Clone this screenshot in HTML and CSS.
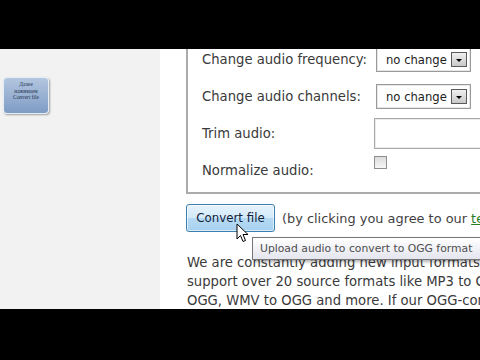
FILE: index.html
```
<!DOCTYPE html>
<html>
<head>
<meta charset="utf-8">
<link rel="stylesheet" href="styles.css">
</head>
<body>
<div class="screen">
  <div class="bar"></div>
  <div class="view">
    <aside class="side">
      <div class="note">Далее<br>нажимаем<br>Convert file</div>
    </aside>
    <main class="main">
      <div class="opts">
        <div class="row"><span class="lbl">Change audio frequency:</span><span class="sel">no change<i class="arr"></i></span></div>
        <div class="row"><span class="lbl">Change audio channels:</span><span class="sel">no change<i class="arr"></i></span></div>
        <div class="row"><span class="lbl">Trim audio:</span><span class="inp"></span></div>
        <div class="row"><span class="lbl">Normalize audio:</span><span class="chk"></span></div>
      </div>
      <div class="submit">
        <span class="btn">Convert file</span>
        <span class="agree">(by clicking you agree to our <a class="terms">terms</a>)</span>
        <svg class="cursor" width="13" height="21" viewBox="0 0 13 21"><path d="M1 1 L1 16 L4.5 12.5 L7 18.5 L9.5 17.5 L7 11.5 L12 11.5 Z" fill="#fff" stroke="#000" stroke-width="1" stroke-linejoin="round"/></svg>
        <div class="tip">Upload audio to convert to OGG format</div>
      </div>
      <p class="text">We are constantly adding new input formats. Currently we<br>support over 20 source formats like MP3 to OGG, WAV to<br>OGG, WMV to OGG and more. If our OGG-converter does</p>
    </main>
  </div>
  <div class="bar bottom"></div>
</div>
</body>
</html>
```
FILE: styles.css
```
* { box-sizing: border-box; }
html, body { margin: 0; padding: 0; background: #000; }
.screen { width: 480px; height: 360px; overflow: hidden; display: flex; flex-direction: column; }
.bar { height: 49px; background: #000; flex: none; }
.bar.bottom { height: 51px; }
.view { height: 260px; display: flex; overflow: hidden; background: #fff; font-family: "DejaVu Sans", Verdana, sans-serif; }
.side { width: 160px; flex: none; background: #f2f2f2; padding: 28px 0 0 3px; }
.note {
  width: 46px; height: 37px; border-radius: 4px;
  background: linear-gradient(#b3c6e0, #7f9cc4);
  border: 1px solid #e8eef6;
  box-shadow: 1px 1px 2px rgba(0,0,0,0.35);
  font-size: 5.4px; line-height: 6.5px; color: #23324f; text-align: center;
  padding-top: 3px; font-family: "Liberation Serif", serif;
}
.main { flex: 1; padding-left: 26px; position: relative; min-width: 0; white-space: nowrap; }
.opts { margin-top: -8px; width: 320px; border-left: 2px solid #ababab; border-bottom: 2px solid #ababab; padding: 0 0 3px 14px; }
.row { height: 37px; display: flex; align-items: center; font-size: 13.2px; color: #3a3a3a; }
.lbl { width: 172px; flex: none; }
.sel {
  flex: none; margin-left: 2px; width: 95px; height: 25px; border: 1px solid #9a9a9a; box-shadow: inset 0 0 0 1px #e6e6e6;
  display: flex; align-items: center; padding-left: 9px; position: relative; color: #222; font-size: 11.6px;
}
.arr {
  position: absolute; right: 3px; top: 4px; width: 16px; height: 15px;
  border: 1px solid #5a5a5a; background: linear-gradient(#f0f0f0, #c8c8c8);
}
.arr::after {
  content: ""; position: absolute; left: 4px; top: 6px;
  border-left: 3px solid transparent; border-right: 3px solid transparent; border-top: 3px solid #000;
}
.inp { flex: none; width: 140px; height: 31px; border: 1px solid #a8a8a8; box-shadow: inset 0 0 0 1px #ececec; }
.chk { flex: none; align-self: flex-start; margin-top: 4px; width: 13px; height: 13px; border: 1px solid #8e8e8e; background: linear-gradient(#dcdcdc, #f6f6f6); }
.submit { margin-top: 10px; display: flex; align-items: center; position: relative; font-size: 12.9px; }
.btn {
  flex: none; width: 89px; height: 28px; border: 1px solid #3c7fb1; border-radius: 3px;
  background: linear-gradient(#e6f3fc 0%, #d2e9f9 50%, #b6daf4 51%, #a8d1ef 100%);
  box-shadow: inset 0 0 0 1px rgba(255,255,255,0.6);
  display: flex; align-items: center; justify-content: center; color: #12213a; font-size: 11.8px;
}
.agree { margin-left: 7px; color: #3f3f3f; }
.terms { color: #2a7d2a; text-decoration: underline; }
.cursor { position: absolute; left: 50px; top: 19px; }
.tip {
  position: absolute; left: 66px; top: 33px; height: 23px; padding: 0 14px 0 7px;
  border: 1px solid #767676; background: linear-gradient(#ffffff, #e4e5ee);
  box-shadow: 2px 2px 3px rgba(0,0,0,0.3);
  font-size: 10.8px; line-height: 21px; color: #4f4f4f;
}
.text { margin: 21px 0 0 1px; font-size: 13.2px; line-height: 19px; color: #3a3a3a; }
```
